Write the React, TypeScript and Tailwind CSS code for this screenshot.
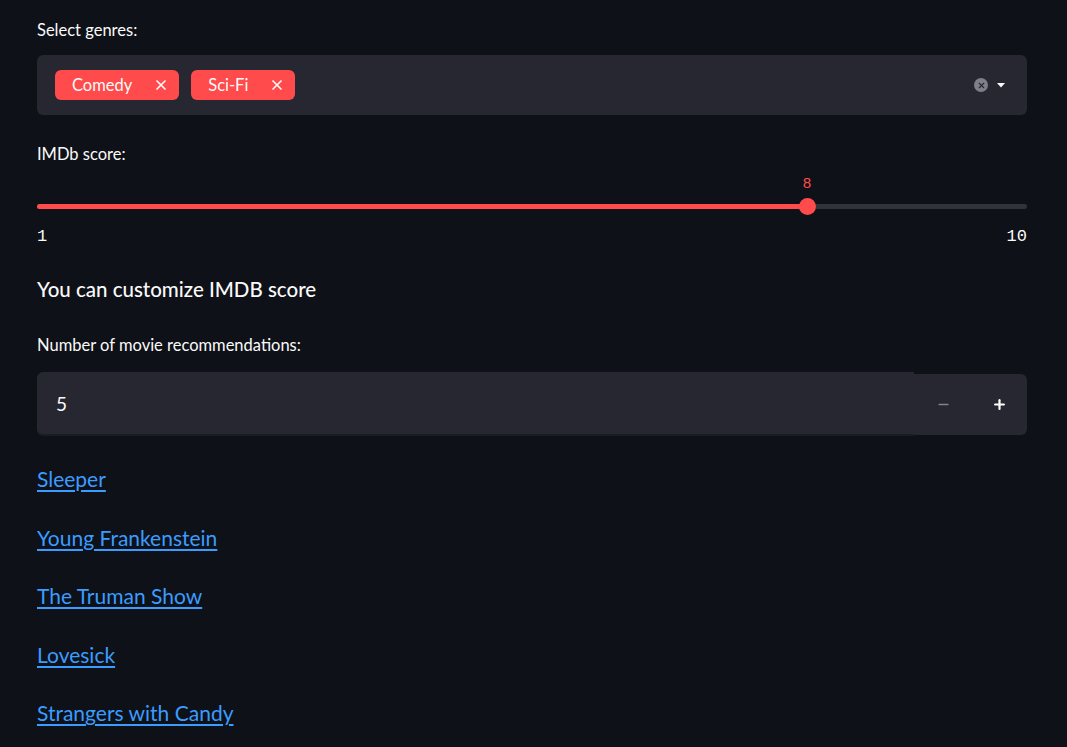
import { X, Minus, Plus } from "lucide-react";

const movies = [
  "Sleeper",
  "Young Frankenstein",
  "The Truman Show",
  "Lovesick",
  "Strangers with Candy",
];

export default function App() {
  const min = 1;
  const max = 10;
  const score = 8;
  const pct = ((score - min) / (max - min)) * 100;

  return (
    <div className="min-h-screen w-full bg-[#0e1117] text-[#fafafa] font-['Lato',sans-serif]">
      <div className="flex flex-col px-[37px] pt-[20px] w-[1064px]">
        {/* Genres */}
        <div className="text-[16.5px] leading-[20px] mb-[15px]">Select genres:</div>
        <div className="h-[60px] rounded-md bg-[#262730] flex items-center pl-[18px] pr-[20px]">
          <div className="flex gap-3 flex-1">
            <div className="h-[30px] rounded-md bg-[#ff4b4b] flex items-center pl-[17px] pr-[10px] gap-[21px] text-[16.5px]">
              Comedy
              <X size={16} strokeWidth={2.5} />
            </div>
            <div className="h-[30px] rounded-md bg-[#ff4b4b] flex items-center pl-[17px] pr-[10px] gap-[21px] text-[16.5px]">
              Sci-Fi
              <X size={16} strokeWidth={2.5} />
            </div>
          </div>
          <div className="flex items-center gap-[7px]">
            <div className="w-[14px] h-[14px] rounded-full bg-[#7d7f89] flex items-center justify-center">
              <X size={9} strokeWidth={3} className="text-[#262730]" />
            </div>
            <svg width="12" height="12" viewBox="0 0 12 12">
              <path d="M2 4 L10 4 L6 8.5 Z" fill="#fafafa" />
            </svg>
          </div>
        </div>

        {/* Slider */}
        <div className="text-[16.5px] leading-[20px] mt-[29px]">IMDb score:</div>
        <div className="relative h-[60px]">
          <div className="absolute left-0 right-0 top-[40px] h-[5px] rounded-full bg-[#31333b]" />
          <div
            className="absolute left-0 top-[40px] h-[5px] rounded-full bg-[#ff4b4b]"
            style={{ width: `${pct}%` }}
          />
          <div
            className="absolute top-[34px] w-[17px] h-[17px] -ml-[8px] rounded-full bg-[#ff4b4b]"
            style={{ left: `${pct}%` }}
          />
          <div
            className="absolute top-[10px] -translate-x-1/2 font-['Liberation_Mono',monospace] text-[15px] text-[#ff4b4b]"
            style={{ left: `${pct}%` }}
          >
            {score}
          </div>
        </div>
        <div className="flex justify-between font-['Liberation_Mono',monospace] text-[17px] leading-[20px] mt-[3px]">
          <span>{min}</span>
          <span>{max}</span>
        </div>

        <div className="text-[20.5px] font-medium leading-[28px] mt-[28px]">
          You can customize IMDB score
        </div>

        {/* Number input */}
        <div className="text-[16.5px] leading-[20px] mt-[32px] mb-[17px]">
          Number of movie recommendations:
        </div>
        <div className="flex items-center">
          <div className="flex-1 h-[64px] rounded-l-md bg-[#262730] border-b-2 border-[#1c1d24] flex items-center pl-[19px] pt-[3px] text-[19px]">
            5
          </div>
          <div className="w-[113px] h-[61px] rounded-r-md bg-[#262730] flex items-center">
            <div className="flex-1 flex justify-center pl-[2px]">
              <Minus size={15} strokeWidth={2.5} className="text-[#80828c]" />
            </div>
            <div className="flex-1 flex justify-center">
              <Plus size={15} strokeWidth={3.5} className="text-white" />
            </div>
          </div>
        </div>

        {/* Recommendations */}
        <div className="flex flex-col gap-[28.5px] mt-[28px]">
          {movies.map((m) => (
            <a
              key={m}
              href="#"
              className="text-[21px] leading-[30px] text-[#3b9cff] underline underline-offset-[3px] w-fit"
            >
              {m}
            </a>
          ))}
        </div>
      </div>
    </div>
  );
}
